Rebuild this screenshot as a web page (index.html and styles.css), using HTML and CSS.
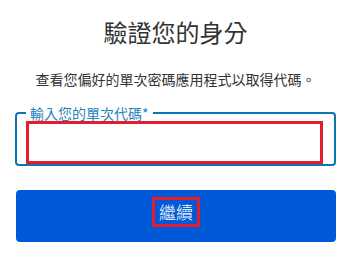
FILE: index.html
```html
<!DOCTYPE html>
<html lang="zh-Hant">

<head>
  <meta charset="UTF-8">
  <title>驗證您的身分</title>
  <link rel="stylesheet" href="styles.css">
</head>

<body>
  <div class="verify-container">
    <h1 class="verify-title">驗證您的身分</h1>
    <p class="verify-desc">查看您偏好的單次密碼應用程式以取得代碼。</p>

    <form class="verify-form">
      <fieldset class="code-field">
        <legend class="code-legend">輸入您的單次代碼*</legend>
        <input type="text" class="code-input" id="code">
      </fieldset>
      <button type="submit" class="continue-btn"><span class="continue-label">繼續</span></button>
    </form>
  </div>
</body>

</html>
```

FILE: styles.css
```css
* {
  margin: 0;
  padding: 0;
  box-sizing: border-box;
}

body {
  font-family: "Noto Sans CJK TC", "Noto Sans", sans-serif;
  background: #ffffff;
  color: #333333;
}

.verify-container {
  width: 321px;
  margin-left: 15px;
}

.verify-title {
  font-size: 24px;
  font-weight: 400;
  line-height: 32px;
  text-align: center;
  padding-top: 16px;
  color: #333333;
}

.verify-desc {
  font-size: 14px;
  line-height: 20px;
  text-align: center;
  margin-top: 21px;
  color: #333333;
}

.verify-form {
  margin-top: 16px;
}

.code-field {
  border: 2px solid #0b76b1;
  border-radius: 4px;
  padding: 0 11px 0 9px;
}

.code-legend {
  font-size: 14px;
  line-height: 16px;
  padding: 0 4px;
  color: #2483bb;
}

.code-input {
  display: block;
  width: 100%;
  height: 43px;
  border: 3px solid #e51c2c;
  outline: none;
  font-family: inherit;
  font-size: 14px;
}

.continue-btn {
  all: unset;
  display: flex;
  justify-content: center;
  align-items: flex-start;
  width: 320px;
  height: 52px;
  margin: 24px 0 0 1px;
  padding-top: 7px;
  box-sizing: border-box;
  background: #0059d6;
  border-radius: 4px;
}

.continue-label {
  font-size: 17px;
  font-weight: 300;
  line-height: 24px;
  padding: 0 4px;
  border: 3px solid #e51c2c;
  color: #ffffff;
}
```
